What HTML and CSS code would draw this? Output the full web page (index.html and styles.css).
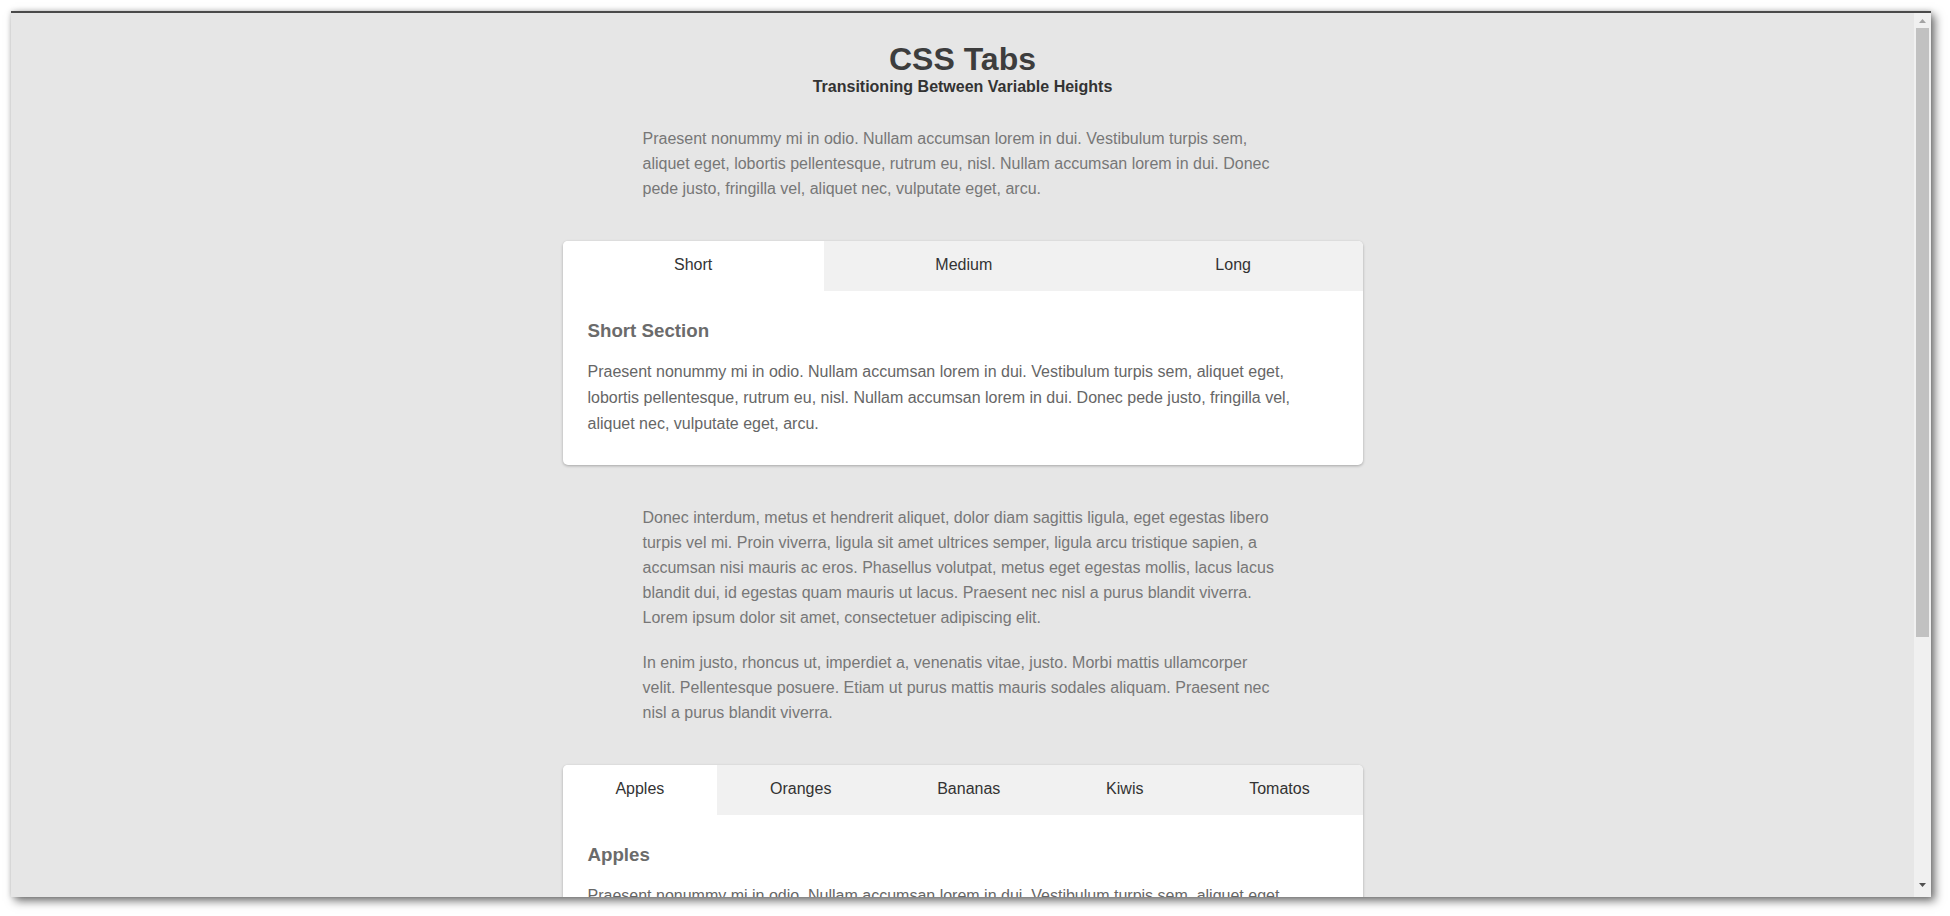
FILE: index.html
```html
<!DOCTYPE html>
<html lang="en">
<head>
<meta charset="utf-8">
<title>CSS Tabs</title>
<link rel="stylesheet" href="styles.css">
</head>
<body>
<div class="window">
  <div class="viewport">
    <div class="page">
      <header class="head">
        <h1 class="title">CSS Tabs</h1>
        <div class="subtitle">Transitioning Between Variable Heights</div>
      </header>

      <div class="text">
        <p>Praesent nonummy mi in odio. Nullam accumsan lorem in dui. Vestibulum turpis sem, aliquet eget, lobortis pellentesque, rutrum eu, nisl. Nullam accumsan lorem in dui. Donec pede justo, fringilla vel, aliquet nec, vulputate eget, arcu.</p>
      </div>

      <div class="tabbox">
        <div class="tabs">
          <div class="tab active">Short</div>
          <div class="tab">Medium</div>
          <div class="tab">Long</div>
        </div>
        <div class="panel">
          <h3 class="panel-title">Short Section</h3>
          <p>Praesent nonummy mi in odio. Nullam accumsan lorem in dui. Vestibulum turpis sem, aliquet eget, lobortis pellentesque, rutrum eu, nisl. Nullam accumsan lorem in dui. Donec pede justo, fringilla vel, aliquet nec, vulputate eget, arcu.</p>
        </div>
      </div>

      <div class="text">
        <p>Donec interdum, metus et hendrerit aliquet, dolor diam sagittis ligula, eget egestas libero turpis vel mi. Proin viverra, ligula sit amet ultrices semper, ligula arcu tristique sapien, a accumsan nisi mauris ac eros. Phasellus volutpat, metus eget egestas mollis, lacus lacus blandit dui, id egestas quam mauris ut lacus. Praesent nec nisl a purus blandit viverra. Lorem ipsum dolor sit amet, consectetuer adipiscing elit.</p>
        <p>In enim justo, rhoncus ut, imperdiet a, venenatis vitae, justo. Morbi mattis ullamcorper velit. Pellentesque posuere. Etiam ut purus mattis mauris sodales aliquam. Praesent nec nisl a purus blandit viverra.</p>
      </div>

      <div class="tabbox tabbox-2">
        <div class="tabs">
          <div class="tab active">Apples</div>
          <div class="tab">Oranges</div>
          <div class="tab">Bananas</div>
          <div class="tab">Kiwis</div>
          <div class="tab">Tomatos</div>
        </div>
        <div class="panel">
          <h3 class="panel-title">Apples</h3>
          <p>Praesent nonummy mi in odio. Nullam accumsan lorem in dui. Vestibulum turpis sem, aliquet eget, lobortis pellentesque, rutrum eu, nisl. Nullam accumsan lorem in dui. Donec pede justo, fringilla vel, aliquet nec, vulputate eget, arcu.</p>
        </div>
      </div>
    </div>
  </div>
  <div class="scrollbar">
    <div class="sb-btn">
      <svg width="7" height="4" viewBox="0 0 7 4"><polygon points="3.5,0 7,4 0,4" fill="#a3a3a3"/></svg>
    </div>
    <div class="sb-track">
      <div class="sb-thumb"></div>
    </div>
    <div class="sb-btn sb-btn-down">
      <svg width="7" height="4" viewBox="0 0 7 4"><polygon points="0,0 7,0 3.5,4" fill="#505050"/></svg>
    </div>
  </div>
</div>
</body>
</html>
```

FILE: styles.css
```css
html, body {
  margin: 0;
  padding: 0;
  background: #ffffff;
  overflow: hidden;
}

body {
  font-family: "Liberation Sans", Arial, sans-serif;
  padding: 11px 0 0 11px;
  height: 916px;
  box-sizing: border-box;
}

.window {
  width: 1920px;
  height: 886px;
  box-sizing: border-box;
  border-top: 2px solid #4a4a4a;
  display: flex;
  box-shadow: 0 0 5px rgba(0, 0, 0, 0.16), 4px 4px 9px rgba(0, 0, 0, 0.55);
  background: #e6e6e6;
}

.viewport {
  flex: 1 1 auto;
  overflow: hidden;
  background: #e6e6e6;
}

.page {
  padding-top: 28px;
}

.head {
  text-align: center;
}

.title {
  margin: 0;
  font-size: 32px;
  line-height: 37px;
  font-weight: bold;
  color: #3d3d3d;
}

.subtitle {
  font-size: 16px;
  line-height: 18px;
  font-weight: bold;
  color: #333333;
}

.text {
  width: 640px;
  margin: 30px auto 0;
}

.text p {
  margin: 0 0 20px;
  font-size: 16px;
  line-height: 25px;
  color: #777777;
}

.text p:last-child {
  margin-bottom: 0;
}

.tabbox {
  width: 800px;
  margin: 40px auto;
  background: #ffffff;
  border-radius: 5px;
  overflow: hidden;
  box-shadow: 0 1px 3px rgba(0, 0, 0, 0.28);
}

.tabbox + .text {
  margin-top: 40px;
}

.tabbox-2 {
  margin-top: 40px;
}

.tabs {
  display: flex;
  background: #f1f1f1;
}

.tab {
  flex: 1 1 auto;
  text-align: center;
  font-size: 16px;
  line-height: 48px;
  height: 50px;
  color: #333333;
}

.tab.active {
  background: #ffffff;
}

.panel {
  padding: 25px 25px 28px;
}

.panel-title {
  margin: 0 0 13px;
  font-size: 18.72px;
  line-height: 30px;
  font-weight: bold;
  color: #6b6b6b;
}

.panel p {
  margin: 0;
  font-size: 16px;
  line-height: 26px;
  color: #666666;
}

.scrollbar {
  flex: 0 0 17px;
  width: 17px;
  background: #f0f0f0;
  display: flex;
  flex-direction: column;
}

.sb-btn {
  height: 15px;
  display: flex;
  align-items: center;
  justify-content: center;
}

.sb-btn svg {
  display: block;
}

.sb-btn-down {
  height: 17px;
  align-items: flex-start;
  padding-top: 3px;
  box-sizing: border-box;
}

.sb-track {
  flex: 1 1 auto;
  padding: 0 2px;
}

.sb-thumb {
  height: 609px;
  background: #c1c1c1;
}
```
